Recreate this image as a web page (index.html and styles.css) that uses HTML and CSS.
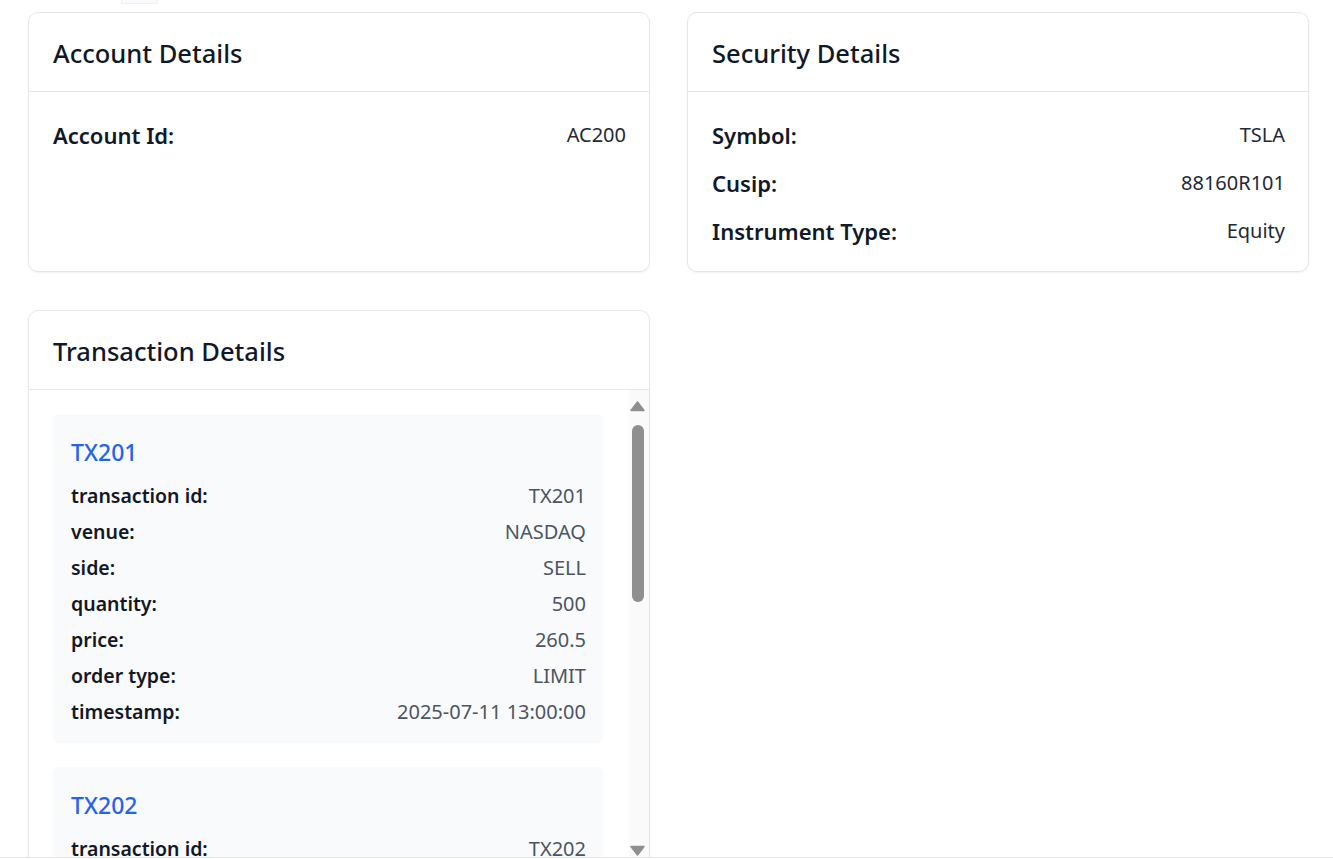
FILE: index.html
```html
<!DOCTYPE html>
<html lang="en">
<head>
<meta charset="utf-8">
<title>Details</title>
<link rel="stylesheet" href="styles.css">
</head>
<body>
<div class="page">
  <div class="topbar"><div class="tab"></div></div>
  <div class="grid">
    <section class="card">
      <header class="card-head"><h2>Account Details</h2></header>
      <div class="card-body">
        <div class="row"><span class="label">Account Id:</span><span class="value">AC200</span></div>
      </div>
    </section>
    <section class="card">
      <header class="card-head"><h2>Security Details</h2></header>
      <div class="card-body">
        <div class="row"><span class="label">Symbol:</span><span class="value">TSLA</span></div>
        <div class="row"><span class="label">Cusip:</span><span class="value">88160R101</span></div>
        <div class="row"><span class="label">Instrument Type:</span><span class="value">Equity</span></div>
      </div>
    </section>
    <section class="card tx-card">
      <header class="card-head"><h2>Transaction Details</h2></header>
      <div class="tx-scroll">
        <div class="tx-list">
          <div class="tx">
            <h3>TX201</h3>
            <div class="tx-row"><span class="tx-label">transaction id:</span><span class="tx-value">TX201</span></div>
            <div class="tx-row"><span class="tx-label">venue:</span><span class="tx-value">NASDAQ</span></div>
            <div class="tx-row"><span class="tx-label">side:</span><span class="tx-value">SELL</span></div>
            <div class="tx-row"><span class="tx-label">quantity:</span><span class="tx-value">500</span></div>
            <div class="tx-row"><span class="tx-label">price:</span><span class="tx-value">260.5</span></div>
            <div class="tx-row"><span class="tx-label">order type:</span><span class="tx-value">LIMIT</span></div>
            <div class="tx-row"><span class="tx-label">timestamp:</span><span class="tx-value">2025-07-11 13:00:00</span></div>
          </div>
          <div class="tx">
            <h3>TX202</h3>
            <div class="tx-row"><span class="tx-label">transaction id:</span><span class="tx-value">TX202</span></div>
            <div class="tx-row"><span class="tx-label">venue:</span><span class="tx-value">NYSE</span></div>
            <div class="tx-row"><span class="tx-label">side:</span><span class="tx-value">BUY</span></div>
            <div class="tx-row"><span class="tx-label">quantity:</span><span class="tx-value">300</span></div>
            <div class="tx-row"><span class="tx-label">price:</span><span class="tx-value">258.2</span></div>
            <div class="tx-row"><span class="tx-label">order type:</span><span class="tx-value">MARKET</span></div>
            <div class="tx-row"><span class="tx-label">timestamp:</span><span class="tx-value">2025-07-11 14:00:00</span></div>
          </div>
        </div>
        <div class="scrollbar" aria-hidden="true">
          <svg class="arrow" width="17" height="12" viewBox="0 0 17 12"><path d="M8.5 2 L15 10.5 L2 10.5 Z" fill="#8f8f8f" stroke="#8f8f8f" stroke-width="1.5" stroke-linejoin="round"/></svg>
          <div class="thumb"></div>
          <div class="spacer"></div>
          <svg class="arrow" width="17" height="12" viewBox="0 0 17 12"><path d="M2 1.5 L15 1.5 L8.5 10 Z" fill="#8f8f8f" stroke="#8f8f8f" stroke-width="1.5" stroke-linejoin="round"/></svg>
        </div>
      </div>
    </section>
  </div>
</div>
</body>
</html>
```

FILE: styles.css
```css
* { box-sizing: border-box; }
html, body { margin: 0; padding: 0; background: #ffffff; }
body {
  font-family: "Noto Sans", "Open Sans", sans-serif;
  color: #111827;
  overflow: hidden;
}
.page {
  height: 858px;
  border-bottom: 1px solid #e5e7eb;
  overflow: hidden;
}
.topbar { height: 4px; padding-left: 121px; }
.tab {
  width: 37px;
  height: 4px;
  background: #f9fafb;
  border: 1px solid #eef0f2;
  border-top: none;
}
.grid {
  display: grid;
  grid-template-columns: 622px 622px;
  column-gap: 37px;
  row-gap: 38px;
  padding: 8px 24px 0 28px;
  align-items: stretch;
}
.card {
  background: #fff;
  border: 1px solid #e5e7eb;
  border-radius: 10px;
  box-shadow: 0 1px 2px rgba(0,0,0,0.05);
}
.card-head {
  padding: 25px 24px 23px;
  border-bottom: 1px solid #e5e7eb;
}
.card-head h2 {
  margin: 0;
  font-size: 25.5px;
  line-height: 30px;
  font-weight: 500;
  color: #111827;
}
.card-body {
  padding: 27px 23px 24px 24px;
  display: flex;
  flex-direction: column;
  gap: 16px;
}
.row {
  display: flex;
  justify-content: space-between;
  align-items: center;
  height: 32px;
}
.label { font-size: 22px; line-height: 32px; font-weight: 600; color: #111827; }
.value { font-size: 20px; line-height: 32px; font-weight: 400; color: #1f2937; }
.tx-card { border-bottom-left-radius: 0; border-bottom-right-radius: 0; }
.tx-scroll {
  height: 468px;
  display: flex;
  overflow: hidden;
}
.tx-list {
  flex: 1;
  min-width: 0;
  padding: 24px 26px 0 24px;
  display: flex;
  flex-direction: column;
  gap: 24px;
}
.scrollbar {
  flex: none;
  width: 20px;
  padding: 10px 3px 1px 0;
  background: #fafafa;
  display: flex;
  flex-direction: column;
  align-items: center;
}
.arrow { display: block; flex: none; }
.thumb {
  flex: none;
  margin-top: 13px;
  width: 12px;
  height: 177px;
  border-radius: 6px;
  background: #8f8f8f;
}
.spacer { flex: 1; }
.tx {
  flex: none;
  background: #f9fafb;
  border-radius: 6px;
  padding: 24px 17px 17px 18px;
  display: flex;
  flex-direction: column;
  gap: 8px;
}
.tx h3 {
  margin: 0 0 8px 0;
  font-size: 23px;
  line-height: 28px;
  font-weight: 500;
  color: #2563eb;
}
.tx-row {
  display: flex;
  justify-content: space-between;
  align-items: center;
  height: 28px;
}
.tx-label { font-size: 19.5px; line-height: 28px; font-weight: 600; color: #111827; }
.tx-value { font-size: 20px; line-height: 28px; font-weight: 400; color: #4b5563; }
```
